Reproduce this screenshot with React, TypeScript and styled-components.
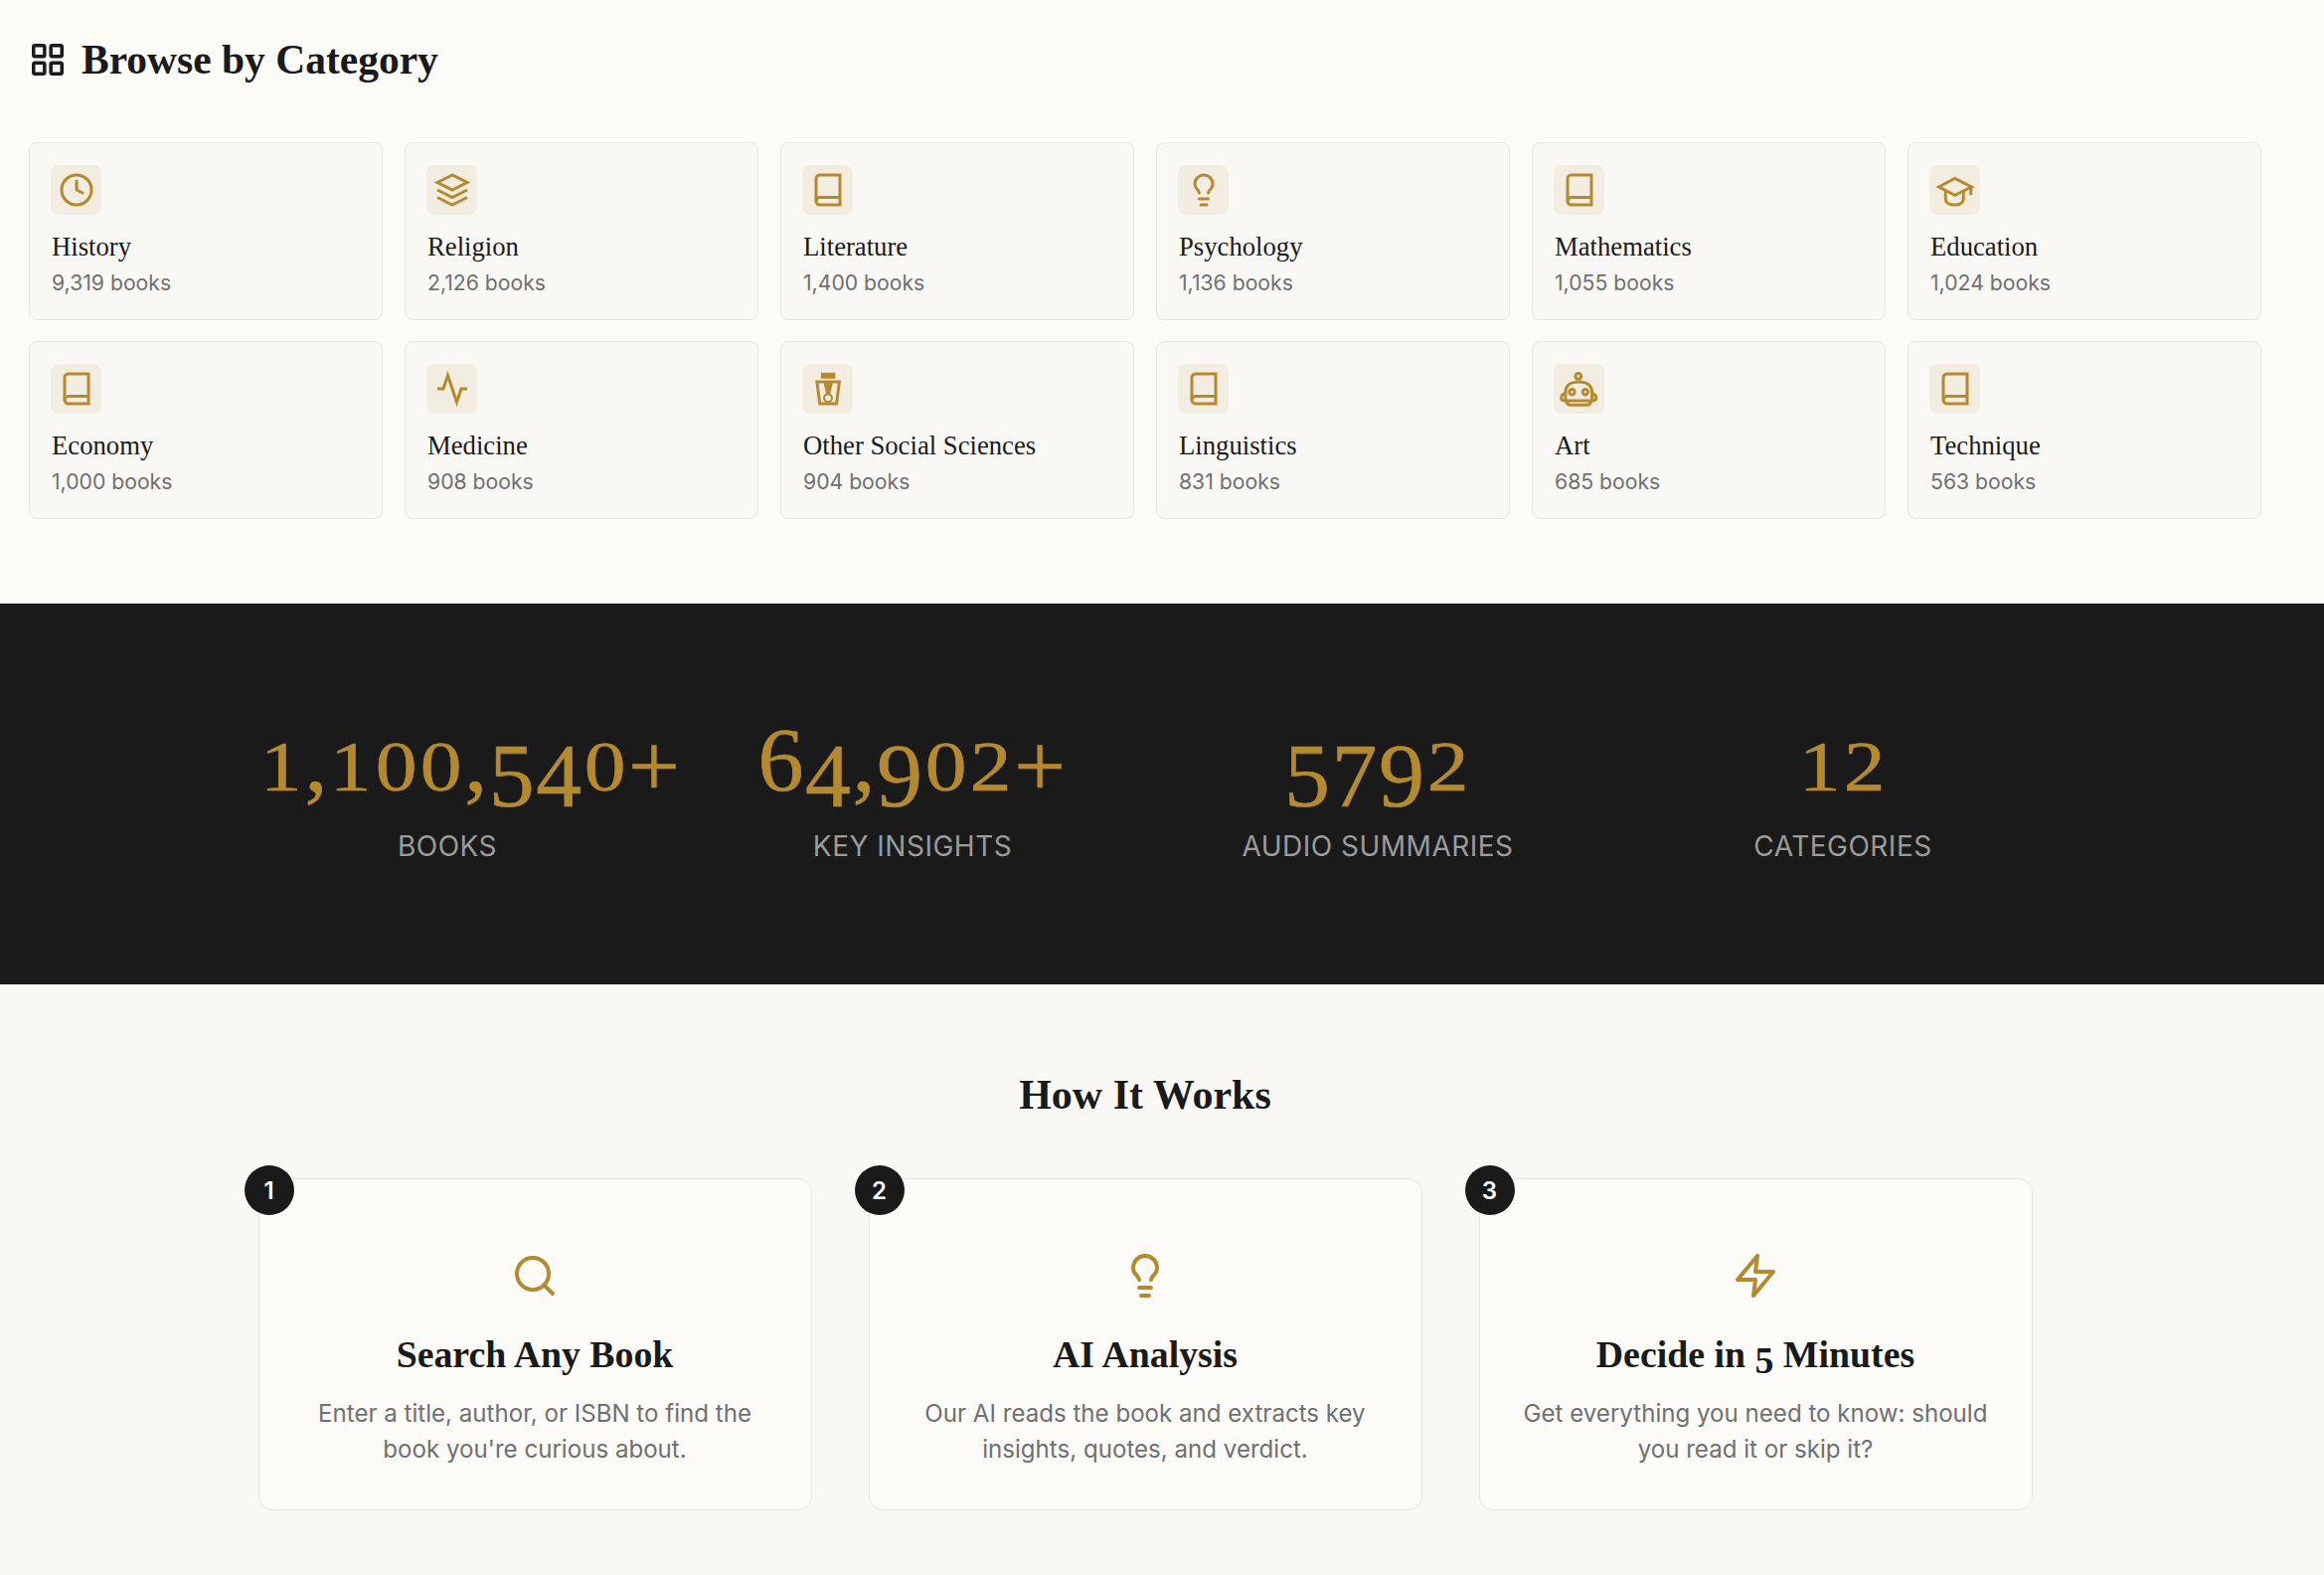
import React from 'react'
import styled, { createGlobalStyle } from 'styled-components'
import { Clock, LayoutGrid, Lightbulb, Search } from 'lucide-react'

const SERIF = '"Liberation Serif", Georgia, serif'
const SANS = 'Inter, "Liberation Sans", sans-serif'
const GOLD = '#b58a2f'
const INK = '#1a1a1a'

const GlobalStyle = createGlobalStyle`
  html, body {
    margin: 0;
    padding: 0;
    background: #fcfbf8;
    color: ${INK};
    font-family: ${SANS};
  }
`

const Page = styled.div`
  width: 2338px;
  height: 1584px;
  overflow: hidden;
`

// Categories
const CategorySection = styled.section`
  height: 607px;
  padding: 0 34px 0 29px;
  box-sizing: border-box;
`

const Heading = styled.div`
  height: 143px;
  padding-bottom: 23px;
  box-sizing: border-box;
  display: flex;
  align-items: center;
  gap: 15px;
  svg {
    width: 38px;
    height: 38px;
    stroke-width: 2.2;
    color: ${INK};
  }
`

const HeadingText = styled.h2`
  margin: 0;
  font-family: ${SERIF};
  font-size: 41.5px;
  font-weight: 700;
`

const CategoryGrid = styled.div`
  display: grid;
  grid-template-columns: repeat(6, 356px);
  grid-auto-rows: 179px;
  column-gap: 22px;
  row-gap: 21px;
`

const CategoryCard = styled.div`
  border: 1px solid #e8e6e1;
  border-radius: 8px;
  background: #faf8f5;
  padding: 22px;
  box-sizing: border-box;
`

const IconBox = styled.div`
  width: 51px;
  height: 50px;
  margin-left: -1px;
  border-radius: 8px;
  background: #f3ede1;
  display: flex;
  align-items: center;
  justify-content: center;
  color: ${GOLD};
  svg {
    width: 36px;
    height: 36px;
    overflow: visible;
  }
`

const CategoryName = styled.div`
  margin-top: 15px;
  font-family: ${SERIF};
  font-size: 26.7px;
  line-height: 34px;
  color: ${INK};
`

const CategoryCount = styled.div`
  margin-top: 4px;
  font-size: 21.2px;
  line-height: 30px;
  color: #707070;
`

// Stats band
const StatsBand = styled.section`
  height: 383px;
  background: #1a1a1a;
  padding: 112px 34px 0 0;
  box-sizing: border-box;
`

const StatsGrid = styled.div`
  display: grid;
  grid-template-columns: repeat(4, 378px);
  column-gap: 90px;
  justify-content: center;
`

const Stat = styled.div`
  text-align: center;
`

const StatValue = styled.div`
  font-family: ${SERIF};
  font-size: 92px;
  line-height: 90px;
  letter-spacing: 1.5px;
  white-space: nowrap;
  color: ${GOLD};
  -webkit-text-stroke: 0.6px ${GOLD};
`

const StatLabel = styled.div`
  margin-top: 21px;
  font-size: 28px;
  line-height: 42px;
  letter-spacing: 0.5px;
  color: #9b9b9b;
`

// Old style figures: Liberation Serif only has lining ones
const Digit = styled.span<{ $kind: 'drop' | 'tall' | 'mark' }>`
  line-height: 0;
  vertical-align: ${p => (p.$kind === 'drop' ? '-0.17em' : p.$kind === 'mark' ? '-0.07em' : 'baseline')};
`

const LowDigit = styled.span`
  display: inline-block;
  line-height: 0;
  font-size: 0.77em;
  margin: 0 0.06em;
  transform: scaleX(1.18);
`

function Figures({ text }: { text: string }) {
  return (
    <>
      {text.split('').map((c, i) => {
        if ('012'.includes(c)) return <LowDigit key={i}>{c}</LowDigit>
        if ('34579'.includes(c)) return <Digit key={i} $kind="drop">{c}</Digit>
        if ('68'.includes(c)) return <Digit key={i} $kind="tall">{c}</Digit>
        if (c === '+') return <Digit key={i} $kind="mark">{c}</Digit>
        return c
      })}
    </>
  )
}

// How it works
const HowSection = styled.section`
  height: 594px;
  background: #f9f8f5;
  padding: 78px 34px 0 0;
  box-sizing: border-box;
`

const HowTitle = styled.h2`
  margin: 0;
  text-align: center;
  font-family: ${SERIF};
  font-size: 42px;
  line-height: 66px;
  font-weight: 700;
  color: ${INK};
`

const StepGrid = styled.div`
  margin-top: 51px;
  display: grid;
  grid-template-columns: repeat(3, 557px);
  column-gap: 57px;
  justify-content: center;
`

const StepCard = styled.div`
  position: relative;
  height: 334px;
  border: 1px solid #e8e6e1;
  border-radius: 14px;
  background: #fcfbf8;
  padding: 73px 40px 0;
  box-sizing: border-box;
  text-align: center;
  svg {
    width: 48px;
    height: 48px;
    stroke-width: 2;
    color: ${GOLD};
    display: block;
    margin: 0 auto;
  }
`

const StepBadge = styled.div`
  position: absolute;
  left: -15px;
  top: -14px;
  width: 50px;
  height: 50px;
  border-radius: 50%;
  background: ${INK};
  color: #fff;
  display: flex;
  align-items: center;
  justify-content: center;
  font-size: 24px;
  font-weight: 600;
`

const StepTitle = styled.h3`
  margin: 31px 0 0;
  font-family: ${SERIF};
  font-size: 37.8px;
  line-height: 48px;
  font-weight: 700;
  color: ${INK};
`

const StepText = styled.p`
  margin: 18px 0 0;
  font-size: 24.1px;
  line-height: 36px;
  color: #707070;
`

function BookIcon() {
  return (
    <svg viewBox="0 0 24 24" fill="none" stroke="currentColor" strokeWidth="2">
      <path d="M4 19.5A2.5 2.5 0 0 1 6.5 17H20" />
      <path d="M6.5 2H20v20H6.5A2.5 2.5 0 0 1 4 19.5v-15A2.5 2.5 0 0 1 6.5 2z" />
    </svg>
  )
}

function LayersIcon() {
  return (
    <svg viewBox="0 0 24 24" fill="none" stroke="currentColor" strokeWidth="2">
      <path d="M12 2 2 7l10 5 10-5z" />
      <path d="m2 17 10 5 10-5" />
      <path d="m2 12 10 5 10-5" />
    </svg>
  )
}

function PulseIcon() {
  return (
    <svg viewBox="0 0 24 24" fill="none" stroke="currentColor" strokeWidth="2">
      <path d="M22 12h-4l-3 9-6-18-3 9H2" />
    </svg>
  )
}

function CapIcon() {
  return (
    <svg viewBox="0 0 24 24" fill="none" stroke="currentColor" strokeWidth="2">
      <path d="M22.5 10v5.5" />
      <path d="M1 10l10.7-5.7L23 10l-11.3 5.5z" />
      <path d="M5.5 12.5V18c0 2.500 2.500 4 6 4s6-1.500 6-4v-5.500" />
    </svg>
  )
}

function BoltIcon() {
  return (
    <svg viewBox="0 0 24 24" fill="none" stroke="currentColor" strokeWidth="2" strokeLinejoin="round">
      <path d="M13 2 3 14h9l-1 8 10-12h-9z" />
    </svg>
  )
}

function SocialIcon() {
  return (
    <svg viewBox="0 0 24 24" fill="none" stroke="currentColor" strokeWidth="2">
      <rect x="7.3" y="1.2" width="9.6" height="4" fill="currentColor" stroke="none" />
      <path d="M4.6 7.4h15l-1.9 14.6H6.5z" />
      <path d="M9 8h6.3l-2 8h-2.4z" fill="currentColor" stroke="none" />
      <circle cx="12" cy="18.2" r="2.6" fill="#f3ede1" stroke="currentColor" strokeWidth="1.4" />
    </svg>
  )
}

function RobotIcon() {
  return (
    <svg viewBox="0 0 24 24" fill="none" stroke="currentColor" strokeWidth="2" strokeLinecap="round" strokeLinejoin="round">
      <circle cx="11.2" cy="3.6" r="1.9" />
      <path d="M2.6 20v-5.500C2.600 9.500 6.500 7.300 11.500 7.300s8.900 2.200 8.900 7.200V20" />
      <path d="M2.600 15C.8 15.500-.2 17-.2 18c0 1.200 1.200 2 2.800 2h17.800c1.600 0 2.800-.8 2.800-2 0-1-1-2.500-2.800-3" />
      <path d="M3.500 20.300c0 1.600 1 2.500 2.500 2.500h11c1.500 0 2.500-.9 2.500-2.500" />
      <circle cx="7" cy="14.200" r="1.800" />
      <circle cx="15.900" cy="14.200" r="1.800" />
    </svg>
  )
}

const categories: { name: string; count: string; icon: React.ReactNode }[] = [
  { name: 'History', count: '9,319 books', icon: <Clock /> },
  { name: 'Religion', count: '2,126 books', icon: <LayersIcon /> },
  { name: 'Literature', count: '1,400 books', icon: <BookIcon /> },
  { name: 'Psychology', count: '1,136 books', icon: <Lightbulb /> },
  { name: 'Mathematics', count: '1,055 books', icon: <BookIcon /> },
  { name: 'Education', count: '1,024 books', icon: <CapIcon /> },
  { name: 'Economy', count: '1,000 books', icon: <BookIcon /> },
  { name: 'Medicine', count: '908 books', icon: <PulseIcon /> },
  { name: 'Other Social Sciences', count: '904 books', icon: <SocialIcon /> },
  { name: 'Linguistics', count: '831 books', icon: <BookIcon /> },
  { name: 'Art', count: '685 books', icon: <RobotIcon /> },
  { name: 'Technique', count: '563 books', icon: <BookIcon /> },
]

const stats = [
  { value: '1,100,540+', label: 'BOOKS' },
  { value: '64,902+', label: 'KEY INSIGHTS' },
  { value: '5792', label: 'AUDIO SUMMARIES' },
  { value: '12', label: 'CATEGORIES' },
]

const steps = [
  { title: 'Search Any Book', text: "Enter a title, author, or ISBN to find the book you're curious about.", icon: <Search /> },
  { title: 'AI Analysis', text: 'Our AI reads the book and extracts key insights, quotes, and verdict.', icon: <Lightbulb /> },
  { title: 'Decide in 5 Minutes', text: 'Get everything you need to know: should you read it or skip it?', icon: <BoltIcon /> },
]

export default function App() {
  return (
    <Page>
      <GlobalStyle />
      <CategorySection>
        <Heading>
          <LayoutGrid />
          <HeadingText>Browse by Category</HeadingText>
        </Heading>
        <CategoryGrid>
          {categories.map(c => (
            <CategoryCard key={c.name}>
              <IconBox>{c.icon}</IconBox>
              <CategoryName>{c.name}</CategoryName>
              <CategoryCount>{c.count}</CategoryCount>
            </CategoryCard>
          ))}
        </CategoryGrid>
      </CategorySection>
      <StatsBand>
        <StatsGrid>
          {stats.map(s => (
            <Stat key={s.label}>
              <StatValue><Figures text={s.value} /></StatValue>
              <StatLabel>{s.label}</StatLabel>
            </Stat>
          ))}
        </StatsGrid>
      </StatsBand>
      <HowSection>
        <HowTitle>How It Works</HowTitle>
        <StepGrid>
          {steps.map((s, i) => (
            <StepCard key={s.title}>
              <StepBadge>{i + 1}</StepBadge>
              {s.icon}
              <StepTitle><Figures text={s.title} /></StepTitle>
              <StepText>{s.text}</StepText>
            </StepCard>
          ))}
        </StepGrid>
      </HowSection>
    </Page>
  )
}
